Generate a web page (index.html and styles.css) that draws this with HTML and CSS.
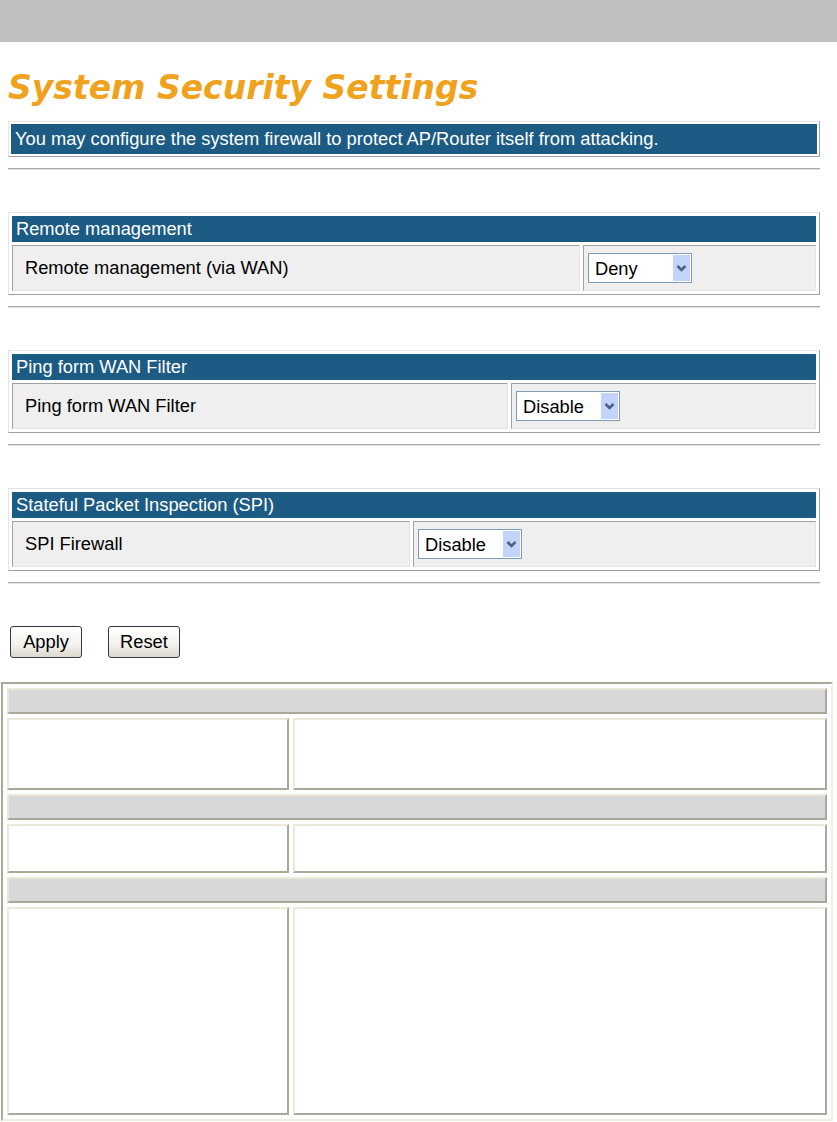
FILE: index.html
```html
<!DOCTYPE html>
<html lang="en">
<head>
    <meta charset="UTF-8">
    <meta name="viewport" content="width=device-width, initial-scale=1.0">
    <title>System Security Settings</title>
    <link rel="stylesheet" href="styles.css">
</head>
<body>
    <div class="topbar"></div>

    <div class="content">
        <h1 class="title">System Security Settings</h1>

        <table class="box info">
            <tr><td class="head">You may configure the system firewall to protect AP/Router itself from attacking.</td></tr>
        </table>
        <hr class="sep">

        <table class="box">
            <tr><td class="head" colspan="2">Remote management</td></tr>
            <tr>
                <td class="label w-remote">Remote management (via WAN)</td>
                <td class="value">
                    <span class="dd">
                        <select class="pick"><option>Deny</option><option>Allow</option></select>
                        <svg class="arrow" viewBox="0 0 17 26"><rect width="17" height="26" fill="#c3d3fb"/><path d="M4.5 11 L8.5 15 L12.5 11" fill="none" stroke="#4d6185" stroke-width="2.6"/></svg>
                    </span>
                </td>
            </tr>
        </table>
        <hr class="sep">

        <table class="box">
            <tr><td class="head" colspan="2">Ping form WAN Filter</td></tr>
            <tr>
                <td class="label w-ping">Ping form WAN Filter</td>
                <td class="value">
                    <span class="dd">
                        <select class="pick"><option>Disable</option><option>Enable</option></select>
                        <svg class="arrow" viewBox="0 0 17 26"><rect width="17" height="26" fill="#c3d3fb"/><path d="M4.5 11 L8.5 15 L12.5 11" fill="none" stroke="#4d6185" stroke-width="2.6"/></svg>
                    </span>
                </td>
            </tr>
        </table>
        <hr class="sep">

        <table class="box">
            <tr><td class="head" colspan="2">Stateful Packet Inspection (SPI)</td></tr>
            <tr>
                <td class="label w-spi">SPI Firewall</td>
                <td class="value">
                    <span class="dd">
                        <select class="pick"><option>Disable</option><option>Enable</option></select>
                        <svg class="arrow" viewBox="0 0 17 26"><rect width="17" height="26" fill="#c3d3fb"/><path d="M4.5 11 L8.5 15 L12.5 11" fill="none" stroke="#4d6185" stroke-width="2.6"/></svg>
                    </span>
                </td>
            </tr>
        </table>
        <hr class="sep">

        <div class="actions">
            <button class="btn">Apply</button>
            <button class="btn">Reset</button>
        </div>
    </div>

    <table class="help">
        <tr><td class="help-head" colspan="2"></td></tr>
        <tr><td class="help-cell col-name row-1"></td><td class="help-cell"></td></tr>
        <tr><td class="help-head" colspan="2"></td></tr>
        <tr><td class="help-cell col-name row-2"></td><td class="help-cell"></td></tr>
        <tr><td class="help-head" colspan="2"></td></tr>
        <tr><td class="help-cell col-name row-3"></td><td class="help-cell"></td></tr>
    </table>
</body>
</html>
```

FILE: styles.css
```css
body {
    margin: 0;
    font-family: "Liberation Sans", Arial, sans-serif;
    font-size: 18.3px;
    color: #000;
    background-color: #fff;
}
.topbar {
    height: 42px;
    background-color: #c0c0c0;
}
.content {
    padding: 0 8px;
}
.title {
    margin: 27px 0 14px;
    font-family: "DejaVu Sans", Verdana, sans-serif;
    font-size: 33px;
    line-height: 38px;
    font-weight: bold;
    font-style: italic;
    color: #f0a21c;
}

/* blue header boxes */
.box {
    width: 812px;
    border: 1px solid;
    border-color: #e4e4e4 #a0a0a0 #a0a0a0 #e4e4e4;
    border-spacing: 3px;
}
.box td {
    border: 1px solid;
    border-color: #a0a0a0 #e4e4e4 #e4e4e4 #a0a0a0;
    padding: 0;
}
.box td.head {
    height: 24px;
    padding: 0 3px;
    background-color: #1c5b84;
    border-color: #1c5b84;
    color: #fff;
}
.info {
    border-spacing: 2px;
}
.info td.head {
    height: 28px;
}
.box td.label {
    height: 44px;
    padding-left: 12px;
    background-color: #efefef;
}
.box td.value {
    padding-left: 4px;
    background-color: #efefef;
}
.w-remote {
    width: 554px;
}
.w-ping {
    width: 482px;
}
.w-spi {
    width: 384px;
}
.sep {
    width: 812px;
    height: 0;
    margin: 11px 0 42px;
    border: none;
    border-top: 1px solid #a8a8a8;
    border-bottom: 1px solid #e6e6e6;
}

/* select boxes */
.dd {
    position: relative;
    display: inline-block;
    vertical-align: middle;
}
.pick {
    appearance: none;
    -webkit-appearance: none;
    width: 104px;
    height: 30px;
    padding: 0 20px 0 6px;
    border: 1px solid #7f9db9;
    border-radius: 0;
    background-color: #fff;
    font-family: "Liberation Sans", Arial, sans-serif;
    font-size: 18.3px;
    color: #000;
}
.arrow {
    position: absolute;
    top: 2px;
    right: 2px;
    width: 17px;
    height: 26px;
    pointer-events: none;
}

.actions {
    display: flex;
    gap: 26px;
    padding-left: 2px;
}
.btn {
    width: 72px;
    height: 32px;
    padding: 0;
    border: 1px solid #2f3c48;
    border-radius: 3px;
    background: linear-gradient(#ffffff, #f2f1ec 60%, #dcd8cd);
    font-family: "Liberation Sans", Arial, sans-serif;
    font-size: 18.3px;
    color: #000;
    cursor: pointer;
}

/* help table at the bottom */
.help {
    width: 832px;
    margin: 24px 0 0 1px;
    border: 2px solid;
    border-color: #aca899 #f1efe2 #f1efe2 #aca899;
    border-spacing: 4px;
}
.help td {
    border: 2px solid;
    border-color: #ece9d8 #aca899 #aca899 #ece9d8;
    padding: 0;
    background-color: #fff;
}
.help td.help-head {
    height: 22px;
    background-color: #d8d8d8;
}
.col-name {
    width: 278px;
}
.row-1 {
    height: 68px;
}
.row-2 {
    height: 45px;
}
.row-3 {
    height: 204px;
}
```
